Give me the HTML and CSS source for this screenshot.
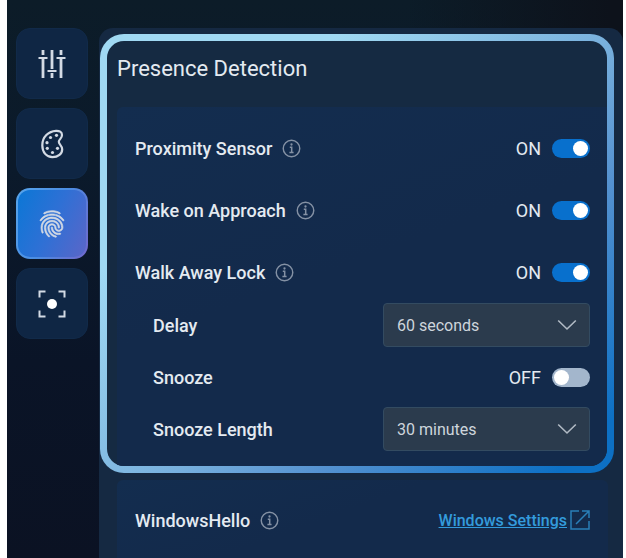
FILE: index.html
```html
<!DOCTYPE html>
<html lang="en">
<head>
<meta charset="utf-8">
<meta name="viewport" content="width=device-width, initial-scale=1">
<title>Presence Detection</title>
<link rel="stylesheet" href="styles.css">
</head>
<body>
<svg width="0" height="0" class="defs" aria-hidden="true">
  <symbol id="info" viewBox="0 0 20 20">
    <circle cx="10" cy="10" r="8.7" fill="none" stroke="currentColor" stroke-width="1.5"/>
    <circle cx="10" cy="5.8" r="1.2" fill="currentColor"/>
    <path d="M8.2 8.7H10.2V14M7.8 14.2H12.2" fill="none" stroke="currentColor" stroke-width="1.6"/>
  </symbol>
  <symbol id="chevron" viewBox="0 0 20 12">
    <path d="M1.2 1.5L10 10L18.8 1.5" fill="none" stroke="currentColor" stroke-width="1.6"/>
  </symbol>
</svg>
<div class="app">
  <nav class="rail" aria-label="Sections">
    <button class="tab" type="button" aria-label="Adjustments">
      <svg width="32" height="32" viewBox="0 0 32 32" fill="none" stroke="currentColor" stroke-width="2">
        <path d="M7 2V7M7 10.5V30M16 2V21M16 25V30M25 2V7M25 10.5V30" stroke-width="2.8"/>
        <path d="M2.500 10H11.500M11.500 23H20.500M20.500 10H29.500"/>
      </svg>
    </button>
    <button class="tab" type="button" aria-label="Appearance">
      <svg width="32" height="32" viewBox="0 0 32 32">
        <path d="M20 2.800C12.500 3.200 6.300 9 6.300 17.200C6.300 24.400 10.600 29.200 16.400 29.200C22.200 29.200 26.200 25.800 26.200 21.200C26.200 17.600 22.800 16.400 22.800 13.800C22.800 11.300 26 10.700 26 7C26 4 23.400 2.600 20 2.800Z" fill="none" stroke="currentColor" stroke-width="2.2"/>
        <g fill="currentColor"><circle cx="20.500" cy="7.300" r="1.600"/><circle cx="14.500" cy="9.500" r="1.600"/><circle cx="11" cy="14.700" r="1.600"/><circle cx="11.300" cy="20.300" r="1.600"/><circle cx="16.500" cy="24.500" r="1.600"/><circle cx="21.500" cy="20.300" r="1.600"/></g>
      </svg>
    </button>
    <button class="tab tab-active" type="button" aria-label="Presence" aria-current="page">
      <svg width="32" height="32" viewBox="0 0 24 24" fill="currentColor" stroke="currentColor" stroke-width=".5">
        <path d="M17.810 4.470c-.08 0-.16-.02-.23-.06C15.660 3.420 14 3 12.010 3c-1.980 0-3.860.47-5.570 1.410-.24.13-.54.04-.68-.2-.13-.24-.04-.55.2-.68C7.820 2.520 9.860 2 12.010 2c2.130 0 3.990.47 6.030 1.520.25.13.34.43.21.67-.09.18-.26.28-.44.28zM3.500 9.720c-.1 0-.2-.03-.29-.09-.23-.16-.28-.47-.12-.7.99-1.400 2.250-2.500 3.750-3.270C9.980 4.040 14 4.030 17.150 5.650c1.500.77 2.760 1.860 3.750 3.250.16.22.11.54-.12.7-.23.16-.54.11-.7-.12-.9-1.260-2.040-2.250-3.390-2.940-2.870-1.470-6.540-1.470-9.400.01-1.360.7-2.500 1.700-3.400 2.960-.08.14-.23.21-.39.21zm6.250 12.070c-.13 0-.26-.05-.35-.15-.87-.87-1.340-1.430-2.010-2.640-.69-1.230-1.050-2.730-1.050-4.340 0-2.970 2.540-5.390 5.660-5.390s5.660 2.420 5.660 5.390c0 .28-.22.5-.5.5s-.5-.22-.5-.5c0-2.420-2.090-4.390-4.660-4.390-2.570 0-4.660 1.970-4.660 4.390 0 1.440.32 2.770.93 3.850.64 1.150 1.080 1.640 1.850 2.420.19.2.19.51 0 .71-.11.1-.24.15-.37.15zm7.170-1.850c-1.190 0-2.240-.3-3.100-.89-1.490-1.010-2.380-2.650-2.380-4.390 0-.28.22-.5.5-.5s.5.22.5.5c0 1.410.72 2.740 1.940 3.560.71.48 1.540.71 2.540.71.24 0 .64-.03 1.040-.1.27-.05.53.13.58.41.05.27-.13.53-.41.58-.57.11-1.070.12-1.210.12zM14.910 22c-.04 0-.09-.01-.13-.02-1.590-.44-2.630-1.030-3.720-2.100-1.400-1.390-2.170-3.240-2.170-5.220 0-1.620 1.380-2.940 3.080-2.940 1.700 0 3.080 1.320 3.080 2.940 0 1.070.93 1.940 2.080 1.940s2.080-.87 2.080-1.940c0-3.770-3.250-6.830-7.250-6.830-2.840 0-5.440 1.580-6.610 4.030-.39.81-.59 1.760-.59 2.800 0 .78.07 2.010.67 3.610.1.26-.03.55-.29.64-.26.1-.55-.04-.64-.29-.49-1.310-.73-2.610-.73-3.960 0-1.200.23-2.290.68-3.240 1.330-2.790 4.280-4.600 7.510-4.600 4.550 0 8.250 3.510 8.250 7.830 0 1.620-1.380 2.940-3.080 2.940s-3.080-1.320-3.080-2.940c0-1.070-.93-1.940-2.080-1.940s-2.080.87-2.080 1.940c0 1.710.66 3.310 1.870 4.510.95.94 1.860 1.460 3.270 1.850.27.07.42.35.35.61-.05.23-.26.38-.47.38z"/>
      </svg>
    </button>
    <button class="tab" type="button" aria-label="Focus">
      <svg width="32" height="32" viewBox="0 0 32 32" fill="none" stroke="currentColor" stroke-width="2">
        <path d="M3.500 9.500V3.500H9.500M22.500 3.500H28.500V9.500M28.500 22.500V28.500H22.500M9.500 28.500H3.500V22.500"/>
        <circle cx="16" cy="16" r="5" fill="#fff" stroke="none"/>
      </svg>
    </button>
  </nav>
  <main class="panel">
    <section class="highlight">
      <h1 class="title">Presence Detection</h1>
      <div class="card">
        <div class="rows">
          <div class="row">
            <label class="name" for="proximity">Proximity Sensor</label>
            <svg class="info"><use href="#info"/></svg>
            <span class="state">ON</span>
            <input class="switch" type="checkbox" id="proximity" checked>
          </div>
          <div class="row">
            <label class="name" for="wake">Wake on Approach</label>
            <svg class="info"><use href="#info"/></svg>
            <span class="state">ON</span>
            <input class="switch" type="checkbox" id="wake" checked>
          </div>
          <div class="row">
            <label class="name" for="lock">Walk Away Lock</label>
            <svg class="info"><use href="#info"/></svg>
            <span class="state">ON</span>
            <input class="switch" type="checkbox" id="lock" checked>
          </div>
        </div>
        <div class="rows rows-nested">
          <div class="row">
            <label class="name" for="delay">Delay</label>
            <div class="picker">
              <select id="delay"><option>60 seconds</option></select>
              <svg class="chevron"><use href="#chevron"/></svg>
            </div>
          </div>
          <div class="row">
            <label class="name" for="snooze">Snooze</label>
            <span class="state">OFF</span>
            <input class="switch" type="checkbox" id="snooze">
          </div>
          <div class="row">
            <label class="name" for="length">Snooze Length</label>
            <div class="picker">
              <select id="length"><option>30 minutes</option></select>
              <svg class="chevron"><use href="#chevron"/></svg>
            </div>
          </div>
        </div>
      </div>
    </section>
    <section class="card card-hello">
      <div class="row">
        <span class="name">WindowsHello</span>
        <svg class="info"><use href="#info"/></svg>
        <a class="link" href="#settings"><span class="link-text">Windows Settings</span>
          <svg class="external" width="20" height="20" viewBox="0 0 20 20" fill="none" stroke="currentColor" stroke-width="1.500">
            <path d="M9 1H1V19H19V11M6 14L18.500 1.500M12 1H19V8"/>
          </svg>
        </a>
      </div>
    </section>
  </main>
</div>
</body>
</html>
```

FILE: styles.css
```css
* {
  box-sizing: border-box;
}

body {
  margin: 0;
  background: #fff;
  color: #e4eaf1;
  font-family: Roboto, "Liberation Sans", sans-serif;
}

.defs {
  position: absolute;
}

.app {
  display: flex;
  gap: 11px;
  min-height: 100vh;
  margin: 0 3px 0 7px;
  padding: 28px 0 0 9px;
  background:
    linear-gradient(to right, transparent 65%, #0d121b 98%) top / 100% 100px no-repeat,
    linear-gradient(#0c1c28, #0b1a2b 30%, #0a1427 65%, #0b1223);
}

.rail {
  display: flex;
  flex-direction: column;
  gap: 9px;
}

.tab {
  display: flex;
  align-items: center;
  justify-content: center;
  width: 72px;
  height: 71px;
  padding: 0;
  border: 1px solid #112a49;
  border-radius: 14px;
  background: #0f2644;
  color: #d3dae4;
}

.tab-active {
  border: 2px solid transparent;
  background:
    linear-gradient(115deg, #0b77d6, #2f70d5 50%, #5b66c8) padding-box,
    linear-gradient(115deg, #57a5ec, #4b8de2 50%, #7167cc) border-box;
}

.panel {
  display: flex;
  flex: 1;
  flex-direction: column;
  gap: 7px;
  min-width: 0;
  padding: 6px 0 0 1px;
  border-radius: 14px 14px 0 0;
  background: #152942;
}

.highlight {
  overflow: hidden;
  margin-right: 9px;
  padding-left: 10px;
  border: 7px solid transparent;
  border-radius: 24px;
  background:
    linear-gradient(#152a42, #152a42) padding-box,
    linear-gradient(135deg, #a0d9f3 25%, #78b0dd 54%, #5592d0 69%, #0d70c4 94%) border-box;
}

.title {
  margin: 0;
  padding: 16px 0 26px;
  font-size: 22px;
  font-weight: 400;
  line-height: 24px;
}

.card {
  padding: 19px 17px 15px 18px;
  border-radius: 6px 0 0;
  background: linear-gradient(160deg, #132d4f, #132a4b 45%);
}

.card-hello {
  flex: 1;
  margin: 0 15px 0 17px;
  padding: 18px 18px 0;
  border-radius: 6px 6px 0 0;
}

.rows {
  display: flex;
  flex-direction: column;
  gap: 18px;
}

.rows-nested {
  gap: 8px;
  margin-top: 9px;
  padding-left: 18px;
}

.row {
  display: flex;
  align-items: center;
  height: 44px;
}

.name {
  font-size: 18px;
  font-weight: 500;
}

.info {
  width: 19px;
  height: 19px;
  margin-left: 10px;
  color: #8491a4;
}

.state {
  margin-left: auto;
  font-size: 18px;
}

.switch {
  appearance: none;
  display: flex;
  align-items: center;
  width: 38px;
  height: 19px;
  margin: 0 0 0 11px;
  padding: 0 2px;
  border-radius: 10px;
  background: #a3b6cc;
}

.switch::before {
  content: "";
  width: 15px;
  height: 15px;
  border-radius: 50%;
  background: #fff;
}

.switch:checked {
  justify-content: flex-end;
  background: #0870cd;
}

.picker {
  position: relative;
  width: 207px;
  margin-left: auto;
}

.picker select {
  appearance: none;
  display: block;
  width: 100%;
  height: 44px;
  padding: 0 13px;
  border: 1px solid #334b61;
  border-radius: 4px;
  background: #2b3b4d;
  color: #ced5dc;
  font-family: inherit;
  font-size: 16px;
}

.chevron {
  position: absolute;
  top: 16px;
  right: 13px;
  width: 20px;
  height: 12px;
  color: #b1bac4;
  pointer-events: none;
}

.link {
  display: flex;
  align-items: center;
  gap: 3px;
  margin-left: auto;
  color: #339bdc;
  font-size: 16px;
  font-weight: 500;
  text-decoration: none;
}

.link-text {
  text-decoration: underline;
}

.external {
  color: #2a7fb8;
}
```
